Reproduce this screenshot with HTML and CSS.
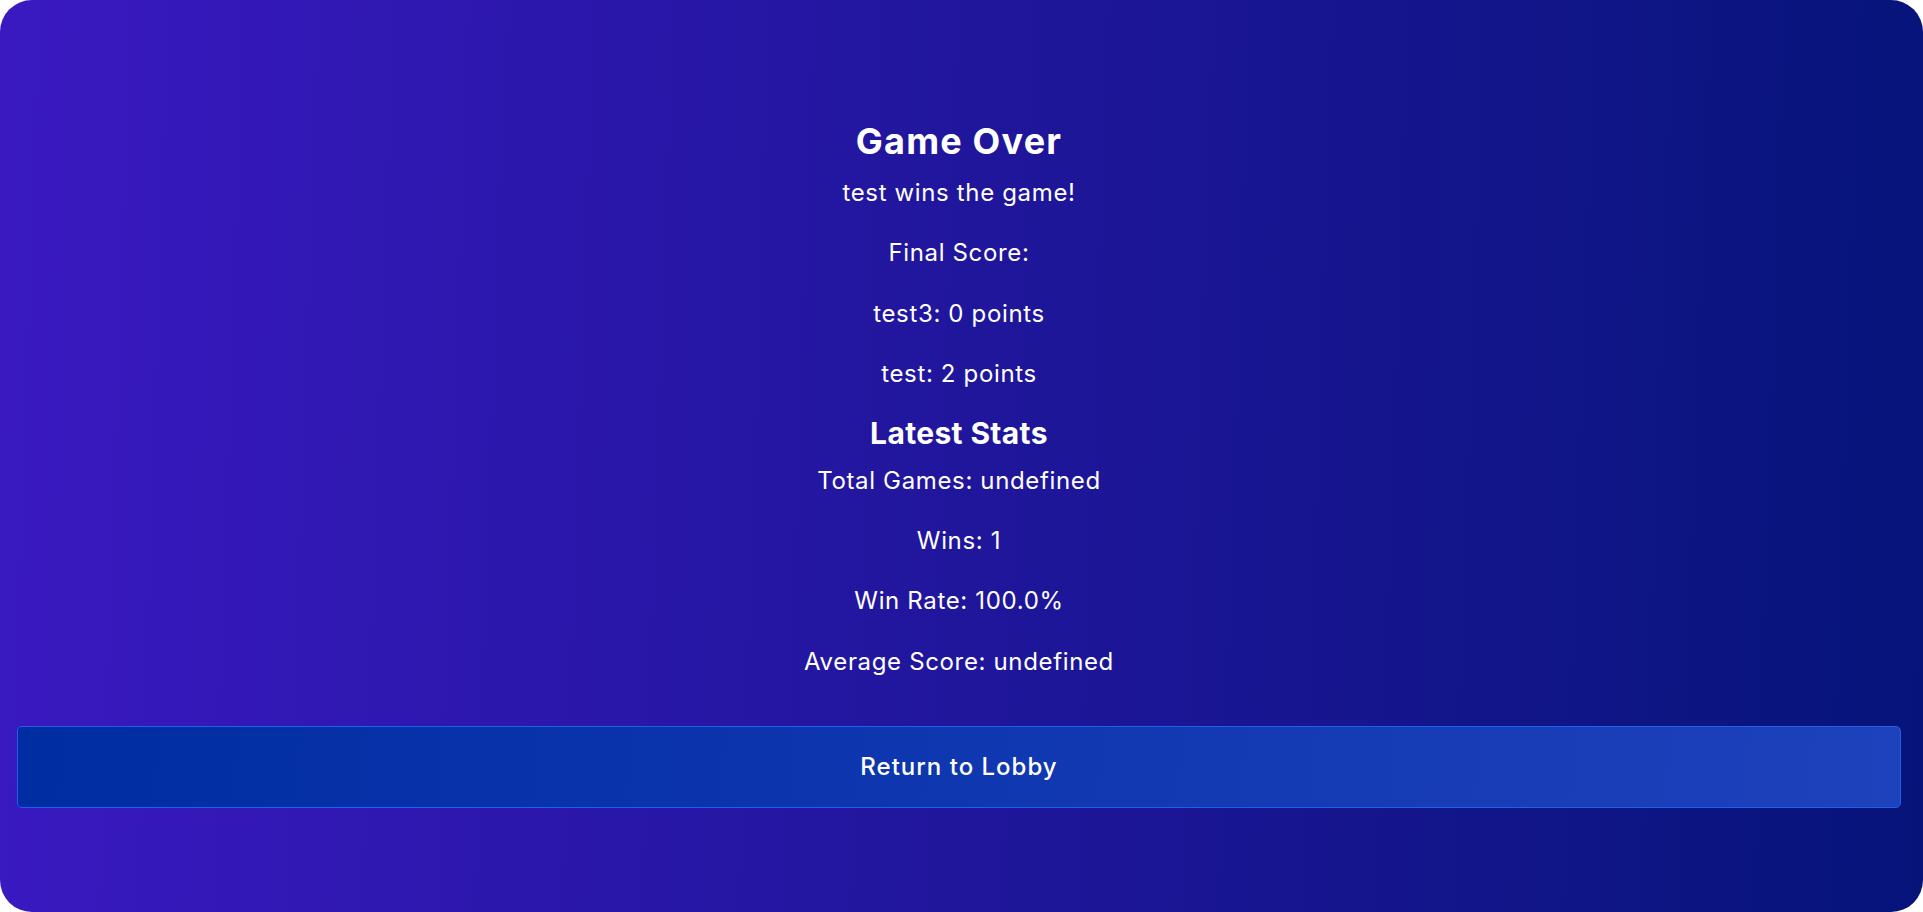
FILE: index.html
```html
<!DOCTYPE html>
<html lang="en">
<head>
<meta charset="utf-8">
<title>Game Over</title>
<link rel="stylesheet" href="styles.css">
</head>
<body>
<main class="screen">
  <section class="results">
    <h2 class="title">Game Over</h2>
    <p class="line winner">test wins the game!</p>
    <p class="line">Final Score:</p>
    <p class="line">test3: 0 points</p>
    <p class="line">test: 2 points</p>
    <h3 class="subtitle">Latest Stats</h3>
    <p class="line first">Total Games: undefined</p>
    <p class="line">Wins: 1</p>
    <p class="line">Win Rate: 100.0%</p>
    <p class="line">Average Score: undefined</p>
  </section>
  <button class="lobby-btn" type="button">Return to Lobby</button>
</main>
</body>
</html>
```

FILE: styles.css
```css
html, body {
  margin: 0;
  padding: 0;
  background: #ffffff;
}

body {
  font-family: Inter, "Noto Sans", sans-serif;
  color: #ffffff;
}

.screen {
  box-sizing: border-box;
  width: 1923px;
  height: 912px;
  border-radius: 32px;
  background: linear-gradient(92deg, #3a19c1 0%, #20169c 50%, #06147a 100%);
  padding: 119px 22px 0 17px;
  display: flex;
  flex-direction: column;
  align-items: stretch;
}

.results {
  display: flex;
  flex-direction: column;
  align-items: center;
  text-align: center;
}

.title {
  margin: 0;
  font-size: 36px;
  line-height: 44px;
  font-weight: 700;
  letter-spacing: 1.2px;
}

.line {
  margin: 24.3px 0 0;
  font-size: 24px;
  line-height: 36px;
  font-weight: 400;
  letter-spacing: 0.65px;
}

.line.winner {
  margin-top: 12px;
}

.line.first {
  margin-top: 10px;
}

.subtitle {
  margin: 21px 0 0;
  font-size: 30px;
  line-height: 40px;
  font-weight: 700;
  letter-spacing: 0.35px;
}

.lobby-btn {
  margin-top: 46px;
  height: 82px;
  border: 1px solid #1f60ea;
  border-radius: 5px;
  background: linear-gradient(95deg, #002da2 0%, #0f37b0 50%, #1e41bc 100%);
  color: #ffffff;
  font-family: Inter, "Noto Sans", sans-serif;
  font-size: 24px;
  font-weight: 500;
  letter-spacing: 1px;
  cursor: pointer;
}
```
